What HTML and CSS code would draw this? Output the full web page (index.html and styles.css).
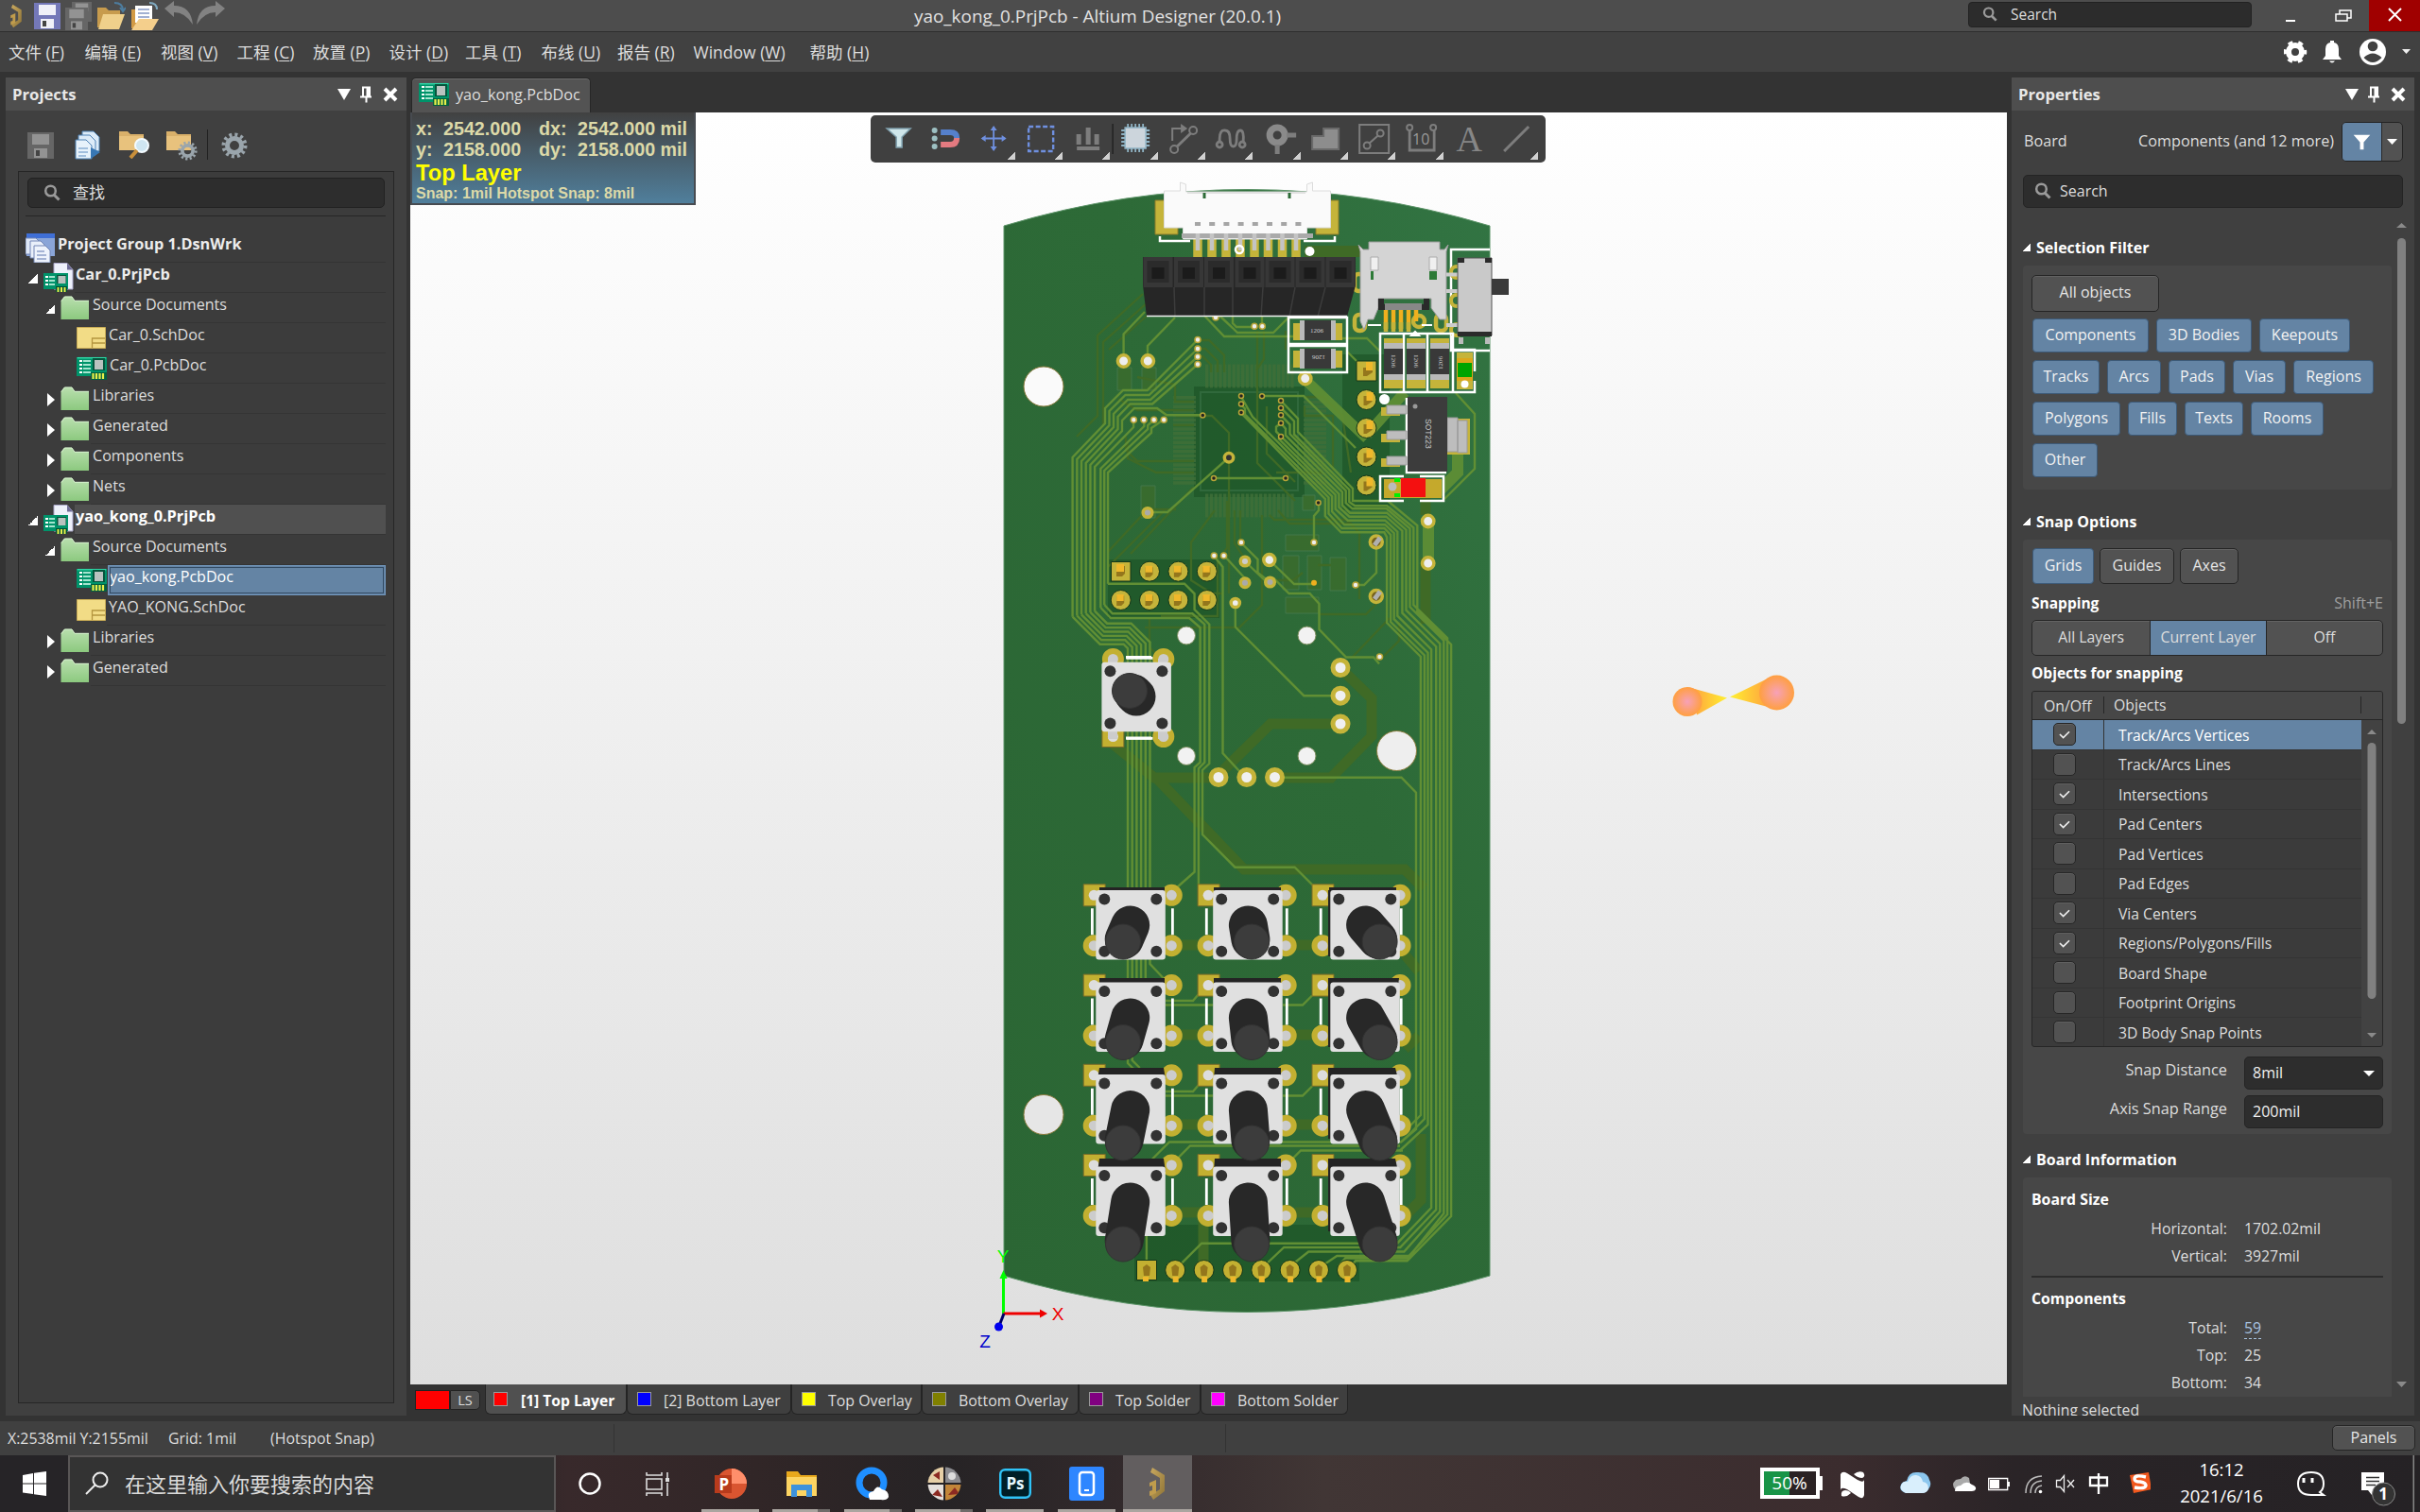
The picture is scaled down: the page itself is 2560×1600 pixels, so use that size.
FILE: index.html
```html
<!DOCTYPE html>
<html lang="zh">
<head>
<meta charset="utf-8">
<title>yao_kong_0.PrjPcb - Altium Designer (20.0.1)</title>
<link rel="stylesheet" href="styles.css">
</head>
<body>
<svg width="0" height="0" class="defs">
  <defs>
    <linearGradient id="gFolder" x1="0" y1="0" x2="0" y2="1"><stop offset="0" stop-color="#b9dfae"/><stop offset="1" stop-color="#8cc97f"/></linearGradient>
    <linearGradient id="gGold" x1="0" y1="0" x2="1" y2="1"><stop offset="0" stop-color="#c9a95f"/><stop offset="1" stop-color="#8f7436"/></linearGradient>
    <symbol id="i-folder" viewBox="0 0 31 26"><path d="M.5 25V5L4 .8h8L15 5h15v20z" fill="url(#gFolder)"/><path d="M1 5.5L4.500 1H12l3 4.300h15" fill="none" stroke="#d8f2d0"/></symbol>
    <symbol id="i-pcb" viewBox="0 0 32 26"><path d="M0 1h32v20H0z" fill="#00936a"/><path d="M.7 1.700h30.600" stroke="#2fd6a6" stroke-width="1.500"/><path d="M3 5h3M3 9h3M3 13h3M3 17h3" stroke="#fff" stroke-width="2"/><path d="M7 5h8M7 9h8M7 13h8M7 17h8" stroke="#d9fff0" stroke-width="1.300"/><path d="M17 2h13v13H17z" fill="#06553d"/><path d="M19 4h9v10h-9z" fill="#b9c2bf"/><path d="M15 17h17v8H15z" fill="#045f3f"/><path d="M17.500 18v6M21 18v6M24.500 18v6M28 18v6" stroke="#e8f04a" stroke-width="2.200"/></symbol>
    <symbol id="i-sch" viewBox="0 0 31 23"><path d="M.5.5h30v22H.5z" fill="#f2dc86" stroke="#c9ac55"/><path d="M16.500 22V12H30M17 17h13" fill="none" stroke="#b4953f" stroke-width="1.300"/></symbol>
    <symbol id="i-prj" viewBox="0 0 32 31"><path d="M11 .5h14l6 7V28H11z" fill="#eef1fb" stroke="#a9a6c8"/><path d="M25 .5v7h6z" fill="#6e6c96"/><path d="M0 11h26v17H0z" fill="#00936a"/><path d="M2 15h3M2 19h3M2 23h3" stroke="#fff" stroke-width="2"/><path d="M6 15h6M6 19h6M6 23h6" stroke="#d9fff0" stroke-width="1.300"/><path d="M14 13h10v9H14z" fill="#06553d"/><path d="M15.500 14h8v8h-8z" fill="#b9c2bf"/><path d="M13 25h12v6H13z" fill="#044f36"/><path d="M15.500 26v5M19 26v5M22.500 26v5" stroke="#e8f04a" stroke-width="2"/></symbol>
    <symbol id="i-group" viewBox="0 0 31 32"><path d="M1 1h30v24H1z" fill="#8aa5d8"/><path d="M1 1h30v5H1z" fill="#3f6fd6"/><path d="M0 6h11l3 3v14H0z" fill="#dfe8f7" stroke="#7286b5"/><path d="M5 9h11l4 4v14H5z" fill="#e9effa" stroke="#7286b5"/><path d="M9 14h12l5 5v13H9z" fill="#eef3fc" stroke="#7286b5"/><path d="M12 20h8M12 24h10M12 28h10" stroke="#8da0c8" stroke-width="1.500"/></symbol>
    <symbol id="i-floppy" viewBox="0 0 28 28"><path d="M0 0h28v28H0z" fill="currentColor"/><path class="slot" d="M5 2h18v11H5zM7 17h14v10H7z"/><path d="M9 19h4v6H9z" fill="#444"/></symbol>
    <symbol id="i-gear" viewBox="0 0 28 28"><circle cx="14" cy="14" r="11.500" fill="none" stroke="#9aa5ac" stroke-width="4" stroke-dasharray="3 3.020"/><circle cx="14" cy="14" r="7.500" fill="none" stroke="#9aa5ac" stroke-width="5"/></symbol>
    <symbol id="i-mag" viewBox="0 0 18 18"><circle cx="7.500" cy="7" r="5.300" fill="none" stroke="#9a9a9a" stroke-width="2.500"/><path d="M11 11l5.500 5.500" stroke="#9a9a9a" stroke-width="3"/></symbol>
    <symbol id="i-pin" viewBox="0 0 12 17"><path d="M2 0h9v10h1v2H7.500v5h-2v-5H0v-2h2z" fill="#fff"/><path d="M4 2h2.500v8H4z" fill="#4d4d4d"/></symbol>
    <symbol id="i-x" viewBox="0 0 16 16"><path d="M2 2l12 12M14 2L2 14" stroke="#fff" stroke-width="4"/></symbol>
    <symbol id="i-alt" viewBox="0 0 24 36"><path d="M7 1l13 8v17L8 35l-3-5 10-6V12L5 6z" fill="url(#gGold)"/><path d="M4 17l7-3v14l-7 3v-5l3-1v-5l-3 1z" fill="#c09c4c"/></symbol>
    <symbol id="i-tick" viewBox="0 0 24 20"><path d="M6.500 10l4 4 7-7" fill="none" stroke="#eee" stroke-width="1.800"/></symbol>
  </defs>
</svg>

<header class="title">
  <div class="quick">
    <svg width="20" height="26"><use href="#i-alt"/></svg>
    <svg class="save" width="28" height="28"><use href="#i-floppy"/></svg>
    <svg class="grey" width="28" height="30" viewBox="0 0 28 30"><use href="#i-floppy" x="7" y="0" width="21" height="21"/><use href="#i-floppy" x="0" y="6" width="24" height="24"/></svg>
    <svg width="31" height="30" viewBox="0 0 31 30"><path d="M1 6h9l3 3h12v18H1z" fill="#c79b4d"/><path d="M7 13h23l-6 16H2z" fill="#efd08b"/><path d="M19 1q9 0 9 8M25 6l3 4 3-4" fill="none" stroke="#4d7d9f" stroke-width="2"/></svg>
    <svg width="31" height="30" viewBox="0 0 31 30"><path d="M1 8h22v20H1z" fill="#d29a45"/><path d="M5 4h18v18H5z" fill="#fff"/><path d="M8 8h12M8 12h12M8 16h12" stroke="#8498c4" stroke-width="1.500"/><path d="M9 18h21l-7 12H1z" fill="#f4cf8c"/><path d="M20 1q8 0 8 7" fill="none" stroke="#7fa9bf" stroke-width="2"/></svg>
    <svg class="arrows" width="66" height="26" viewBox="0 0 66 26"><path d="M0 8L10 0v5q18 0 20 20Q22 12 10 12v5zM64 8L54 0v5q-18 0-20 20Q42 12 54 12v5z" fill="#828282"/></svg>
  </div>
  <div class="caption">yao_kong_0.PrjPcb - Altium Designer (20.0.1)</div>
  <div class="top-search"><svg width="16" height="16"><use href="#i-mag"/></svg>Search</div>
  <svg class="winbtns" width="126" height="33" viewBox="0 0 126 33"><path d="M0 21h10v2H0z" fill="#fff"/><path d="M57 15v-4h12v8h-4M53 15h12v7H53z" fill="none" stroke="#fff" stroke-width="1.500"/><path d="M72 0h54v33H72z" fill="#a00000" transform="translate(16)"/><path d="M109 9l13 13M122 9l-13 13" stroke="#fff" stroke-width="2"/></svg>
</header>

<nav class="menu">
  <span>文件 (<u>F</u>)</span><span>编辑 (<u>E</u>)</span><span>视图 (<u>V</u>)</span><span>工程 (<u>C</u>)</span><span>放置 (<u>P</u>)</span><span>设计 (<u>D</u>)</span><span>工具 (<u>T</u>)</span><span>布线 (<u>U</u>)</span><span>报告 (<u>R</u>)</span><span>Window (<u>W</u>)</span><span>帮助 (<u>H</u>)</span>
  <svg class="menu-icons" width="140" height="42" viewBox="0 0 140 42"><circle cx="12" cy="21" r="7" fill="none" stroke="#fff" stroke-width="6"/><circle cx="12" cy="21" r="10.500" fill="none" stroke="#fff" stroke-width="3.500" stroke-dasharray="5 6" stroke-dashoffset="2.500"/><path d="M41 29l3-4v-7q0-6 5-7V9h4v2q5 1 5 7v7l3 4zM48 30.500h6q-3 4-6 0z" fill="#fff"/><circle cx="94" cy="21" r="14" fill="#fff"/><circle cx="94" cy="15" r="5.300" fill="#414141"/><path d="M84.500 27q9.500-9 19 0-9.500 10-19 0z" fill="#414141"/><path d="M125 18h9l-4.500 5z" fill="#eee"/></svg>
</nav>

<main class="work">
  <aside class="panel projects">
    <div class="panel-head"><b>Projects</b><svg class="tri" width="14" height="12" viewBox="0 0 14 12"><path d="M0 0h14L7 12z" fill="#fff"/></svg><svg width="12" height="18"><use href="#i-pin"/></svg><svg width="16" height="16"><use href="#i-x"/></svg></div>
    <div class="tools">
      <svg class="grey" width="28" height="28"><use href="#i-floppy"/></svg>
      <svg width="28" height="31" viewBox="0 0 28 31"><path d="M8 1h12l6 6v15H8z" fill="#dcebf8" stroke="#4f82b5"/><path d="M4 5h12l6 6v15H4z" fill="#dcebf8" stroke="#4f82b5"/><path d="M1 10h11l6 6v14H1z" fill="#e7f2fb" stroke="#4f82b5"/><path d="M4 19h10M4 23h10M4 27h8" stroke="#5c8cc0"/><path d="M17 18l10 5-10 7z" fill="#3877b4"/></svg>
      <svg width="32" height="31" viewBox="0 0 32 31"><path d="M0 2h9l3 3h14v17H0z" fill="#d9b06a"/><path d="M0 7h26v15H0z" fill="#e8c27d"/><circle cx="24" cy="17" r="7" fill="#cfe6f2" stroke="#f4fbff" stroke-width="2"/><path d="M19 22l-7 8" stroke="#c88f3b" stroke-width="4"/></svg>
      <svg width="33" height="33" viewBox="0 0 33 33"><path d="M0 2h9l3 3h14v17H0z" fill="#d9b06a"/><path d="M0 7h26v15H0z" fill="#e8c27d"/><use href="#i-gear" x="12" y="12" width="21" height="21"/></svg>
      <i class="vsep"></i>
      <svg width="28" height="28"><use href="#i-gear"/></svg>
    </div>
    <div class="tree-box">
      <div class="find"><svg width="18" height="18"><use href="#i-mag"/></svg>查找</div>
      <ul class="tree">
        <li class="l0"><svg width="31" height="32"><use href="#i-group"/></svg><b>Project Group 1.DsnWrk</b></li>
        <li class="l1 open"><i></i><svg width="32" height="31"><use href="#i-prj"/></svg><b>Car_0.PrjPcb</b></li>
        <li class="l2 open"><i></i><svg width="31" height="26"><use href="#i-folder"/></svg><span>Source Documents</span></li>
        <li class="l3"><svg width="31" height="23"><use href="#i-sch"/></svg><span>Car_0.SchDoc</span></li>
        <li class="l3"><svg width="32" height="26"><use href="#i-pcb"/></svg><span>Car_0.PcbDoc</span></li>
        <li class="l2"><i></i><svg width="31" height="26"><use href="#i-folder"/></svg><span>Libraries</span></li>
        <li class="l2"><i></i><svg width="31" height="26"><use href="#i-folder"/></svg><span>Generated</span></li>
        <li class="l2"><i></i><svg width="31" height="26"><use href="#i-folder"/></svg><span>Components</span></li>
        <li class="l2"><i></i><svg width="31" height="26"><use href="#i-folder"/></svg><span>Nets</span></li>
        <li class="l1 open active"><i></i><svg width="32" height="31"><use href="#i-prj"/></svg><b>yao_kong_0.PrjPcb</b></li>
        <li class="l2 open"><i></i><svg width="31" height="26"><use href="#i-folder"/></svg><span>Source Documents</span></li>
        <li class="l3 picked"><svg width="32" height="26"><use href="#i-pcb"/></svg><span>yao_kong.PcbDoc</span></li>
        <li class="l3"><svg width="31" height="23"><use href="#i-sch"/></svg><span>YAO_KONG.SchDoc</span></li>
        <li class="l2"><i></i><svg width="31" height="26"><use href="#i-folder"/></svg><span>Libraries</span></li>
        <li class="l2"><i></i><svg width="31" height="26"><use href="#i-folder"/></svg><span>Generated</span></li>
      </ul>
    </div>
  </aside>

  <section class="editor">
    <div class="tabs"><div class="doc-tab"><svg width="32" height="26"><use href="#i-pcb"/></svg>yao_kong.PcbDoc</div></div>
    <div class="view">
      <svg class="board" width="1689" height="1346" viewBox="434 119 1689 1346">
        <defs>
          <radialGradient id="gBlob"><stop offset="0" stop-color="#f7a1b8"/><stop offset="1" stop-color="#ff9f40"/></radialGradient>
          <linearGradient id="gB1" x1="0" x2="1"><stop offset="0" stop-color="#ff9f40"/><stop offset="1" stop-color="#fff030"/></linearGradient>
          <linearGradient id="gB2" x1="1" x2="0"><stop offset="0" stop-color="#ff9f40"/><stop offset="1" stop-color="#fff030"/></linearGradient>
          <linearGradient id="gPcb" x1="0" y1="1" x2="1" y2="0"><stop offset="0" stop-color="#2b6634"/><stop offset=".6" stop-color="#2d6a37"/><stop offset="1" stop-color="#327443"/></linearGradient>
          <g id="pads"><path d="M.5.5h23v23H.5z" fill="#c3b031" stroke="#7b6c28"/><circle cx="93.600" cy="12" r="8.500" fill="#ccc" stroke="#c3b031" stroke-width="6"/><circle cx="11.500" cy="65.400" r="8.500" fill="#ccc" stroke="#c3b031" stroke-width="6"/><circle cx="93.600" cy="65.400" r="8.500" fill="#ccc" stroke="#c3b031" stroke-width="6"/><circle cx="11.500" cy="12" r="5.500" fill="#ddd"/><path d="M9.700 26v28M94.700 26v28" stroke="#fff" stroke-width="2.800"/></g>
          <g id="cap"><rect width="73.500" height="73.500" rx="3" fill="#e0e0e0"/><g fill="#323232"><circle cx="9" cy="9.500" r="6"/><circle cx="64" cy="9.500" r="6"/><circle cx="9" cy="64.700" r="6"/><circle cx="64" cy="64.700" r="6"/></g></g>
          <g id="ring"><circle r="8" fill="#f0f0f0" stroke="#c5b43a" stroke-width="5"/></g>
          <g id="hp"><circle r="10.500" fill="#c5b43a" stroke="#12371a"/><path d="M-4.500-4.500h8V3l-3 3h-5z" fill="#94761c"/><path d="M-4.500-6h7.500v7h-7.500z" fill="#efb82b"/></g>
          <g id="hr"><circle r="10.500" fill="#c5b43a" stroke="#12371a"/><path d="M-3-4h9v6l-6 4h-3z" fill="#94761c"/><path d="M0-8h7v9H0z" fill="#efb82b"/></g>
          <g id="bp"><circle r="10.500" fill="#c3b031" stroke="#12371a"/><path d="M-4-3l4-3 4 3-1 9h-6z" fill="#94761c"/><path d="M-2.500 7h6v6h-6z" fill="#efb82b"/></g>
          <g id="via"><circle r="3" fill="#eee" stroke="#b8a438" stroke-width="1.600"/></g>
          <g id="viad"><circle r="2.500" fill="#222" stroke="#b8a438" stroke-width="1.500"/></g>
          <g id="sock"><path d="M0 0h31v32H0z" fill="#373737"/><path d="M4 4h23v23H4z" fill="#2b2b2b"/><path d="M9 11h13v12H9z" fill="#1b1b1b"/></g>
        </defs>

        <path d="M1062 239Q1319 162 1576 239V1350Q1319 1427 1062 1350z" fill="url(#gPcb)" stroke="#5c9468"/>

        <g class="shade">
          <path d="M1263 409h117v117h-117zM1172 592h118v62h-118zM1420 375h50v165h-50zM1200 1296h238v60h-238z"/>
        </g>
        <g class="smd">
          <path d="M1360 566h35v17h-35zM1360 632h35v17h-35zM1357 588h17v36h-17zM1383 588h15v36h-15zM1407 590h17v35h-17zM1378 524h13v16h-13zM1182 389h15v24h-15zM1208 389h15v24h-15zM1207 514h15v34h-15z"/>
        </g>
        <g class="pins">
          <path d="M1275 398h94M1275 535h94" stroke-dasharray="3.400 1.350" stroke-width="25"/>
          <path d="M1253 419v94M1391 419v94" stroke-dasharray="3.400 1.350" stroke-width="24"/>
        </g>
        <path d="M1270 415h103v104h-103z" fill="none" stroke="#30693c" stroke-width="2"/>
        <g class="dim">
          <path d="M1420 709l31 30v40l-43 44h-59M1418 766h-74l-54 53M1177 787l44 36h68M1224 824l92 96h170l20 20M1508 590v70M1508 520v25"/>
          <path d="M1250 1000h25M1370 1000h25M1250 1095h25M1370 1095h25M1250 1190h25M1370 1190h25M1250 1283h25M1370 1283h25M1273 1290v50M1503 1200v70l-20 20M1486 1110l15-14M1486 1010l15 18"/>
          <path d="M1380 266h60" stroke-width="12"/>
        </g>
        <g class="dimthin">
          <path d="M1209 311l-48 44v85l-22 22M1214 320l-47 42v88M1220 328l-47 42M1267 360h12l16 16v18M1267 369h8l13 13v12M1267 377h5l9 9v8M1263 425h-20v-18l-40-8M1263 434h-60l-20-12M1244 440h38l18 18v170M1263 450h-22M1196 586l66-70M1172 584l42-45h30M1172 600l60-60M1263 500h-40l-30-15v-18M1263 488h-60l-12-12v-14M1298 530v50l-10 12v60h-60M1285 540l-25 34v40l22 14h12M1306 540v35l10 15M1312 540v36M1335 545v95l-24 24h-100M1343 545l5 5h76l14 14v70M1352 540l12 14h66M1380 420h20l20 20 9 60M1380 430v10h30v58M1360 350v20M1337 350v30l-8 12M1330 350v50M1216 655v30l10 10M1430 696l40-42M1460 698l20-20v-20M1395 650h50l12-12M1378 606l-10 8h-25M1394 598h14M1330 400v90l40 40M1340 430v50l30 30M1350 500h50"/>
        </g>

        <g class="track">
          <path d="M1134.600 652.700V484l34.400-36v-16l19-19h25.600l53.400-53.500M1139.300 651.500V486l34.200-36v-15l17-17h25l51.500-49M1144 650.300V488l34-36v-14l15-15h24l50-45.500M1148.700 649.100V490l33.800-36v-13l13-13.500h23.500l48-42M1153.400 647.900V492l33.600-36v-11l13-13h24l10 7.300h38M1158.100 646.700V494l41-42v-8M1164.300 643V496l46-45v-7M1168.200 640V498l46-44v-4l7-6M1172 617.700V500l46-42v-5l13-9"/>
          <path d="M1134.600 652.700l29 29h25l4.400 4.400V1125l6 6M1139.300 651.500l25.800 25.800h25.100l7.500 7.500V1122l8 8M1144 650.300l22.600 22.600h25.200l10.600 10.600V1035M1148.700 649.100l19.400 19.400h25.300l13.700 13.700V1035M1153.400 647.900l16.200 16.200H1195l16.800 16.800V1035M1158.100 646.700l13 13h25.500l19.900 19.900V1020l15 16"/>
          <path d="M1172 617.700h81l10.600 10.600V645l15.700 15.700V808l-7.300 7v68l34.400 34.700h63.200l20 20M1168.200 640l8.600 9.300h84.600l12.900 11.400v146l-6.400 6.600V936M1164.300 643l10.700 11h83l11.600 10v142.700l-6 5.300v110.700L1244 940"/>
          <path d="M1312.500 436.700L1401.800 528v18l16.800 17.300h45.700l2.800 5V659l35.800 36v485l-22 22M1312.500 427.500l4.500 5v6l88.500 88v17l14 15.500h45l6.600 7v92l35.800 35.500V1184l-24 24M1312.500 419l12.500 22 84.100 84.200v16l13.100 14h43l9.500 9v91l35.800 35.500V1190l-30 28M1355 461.700l-2 3 59.700 59v15l13 12h39.500l13.100 12v89l35.800 35.500V1278l-36 37.700h-207l-21 21M1355 447.700l-5 4v5l66.400 66v14l11 10h39l17 15v87l35.800 35.500V1280l-38 40h-123l-17 16M1355 447.700l5 6v7l60 60v14l8 8h39l20.500 18v85l35.800 35.500V1282l-38 42.500h-101l-19 15M1355 439.300l9.500 10v10l59.200 60v13l7 6h36l24.800 21v83l35.800 35.500V1284l-36 45h-77l-12 8M1355 431.700l14 14v14l58.300 58.500v13l6 4h34l28 23v82l35.800 35V1285l-43 46.500h-65l-7 8M1355 424l18 19v14l58 60v13h37l31.300 26v91l35.800 35v605l-46.500 47.300H1434l-6 6"/>
          <path d="M1350 822.700h132.500l15.500 16V1195l-16 13.500h-245l-18 18M1481 1212.500h-222l-16 16M1484 1217.500h-108l-16 16M1488 1224l-12 12M1306.800 663.500l72.500 72.700h38M1306.800 638v26M1284 588l9.500 12v197l24 26M1312.500 574l18 18v14l9 7 8-1 16 16h22l10 11v27l28.500 29.500h29l6 7M1295 588l22 24M1317 594l25 24M1342 592l27 26h21M1456 574v32l-13 13h-9M1390 574v-28l5-6v-8M1300 484l-65 58h-21M1284 506h76M1335 419h44l55 55"/>
          <path d="M1211 330l-22.400 23.500v25M1243 336l-29 30v14M1274 334l21 22h116M1304 334v8l4 4h20M1290 334l14 13 5 5h38l18-18M1335 334v11M1400 358h46l14 14M1425 372l12 12M1540 416l20 22v58l-32 32M1212.900 1308v34M1233 1059h29l6-7M1233 1063.500h50M1357 1063.500h21l10-10M1233 1155h29l6-7M1233 1159.500h50M1357 1159.500h21l10-10"/>
          <path d="M1383 404l63 60M1446 460l40-45" stroke-width="11" opacity=".9"/>
          <path d="M1511 552v44M1542 480v20l-22 22" stroke-width="12" opacity=".9"/>
        </g>

        <g fill="#fafafa" stroke="#8a7b3c"><circle cx="1104" cy="409" r="21"/><circle cx="1477.500" cy="794.500" r="21" fill="#eee"/><circle cx="1104" cy="1179.500" r="21" fill="#e6e6e6"/></g>
        <g fill="#f2f2f2" stroke="#7d8f60"><circle cx="1255" cy="672.500" r="9.500"/><circle cx="1382.500" cy="672.500" r="9.500"/><circle cx="1255" cy="800" r="9.500"/><circle cx="1382.500" cy="800" r="9.500"/></g>
        <use href="#ring" x="1418" y="706.500"/><use href="#ring" x="1418" y="736.200"/><use href="#ring" x="1418" y="766"/>
        <use href="#ring" x="1289" y="822.500"/><use href="#ring" x="1318.800" y="822.500"/><use href="#ring" x="1348.500" y="822.500"/>
        <g fill="#eee" stroke="#c5b43a" stroke-width="3.500"><circle cx="1188.600" cy="382" r="6.200"/><circle cx="1214.300" cy="382" r="6.200"/><circle cx="1380.700" cy="400.500" r="6.200"/><circle cx="1510.700" cy="551.500" r="6.200"/><circle cx="1510.700" cy="596" r="6.200"/><circle cx="1214" cy="542.500" r="4.800" fill="#aaa"/><circle cx="1317" cy="594" r="4.800" fill="#ccc"/><circle cx="1342.800" cy="592.500" r="6"/><circle cx="1317" cy="616.700" r="4.800" fill="#aaa"/><circle cx="1343.500" cy="616" r="4.800" fill="#aaa"/><circle cx="1306.800" cy="638" r="4.600"/><circle cx="1300" cy="484.300" r="4.700" fill="#333"/></g>
        <g stroke="#c5b43a" stroke-width="3.500" fill="#75611c"><circle cx="1455.800" cy="573.500" r="6.500"/><circle cx="1455.800" cy="631" r="6.500"/></g><path d="M1454 577l6-8M1454 634l6-8" stroke="#b0b0b0" stroke-width="5"/>
        <use href="#via" x="1267" y="359.500"/><use href="#via" x="1267" y="369"/><use href="#via" x="1267" y="377.500"/><use href="#via" x="1267" y="385.500"/><use href="#via" x="1199.300" y="444.300"/><use href="#via" x="1210" y="444.300"/><use href="#via" x="1220.700" y="444.300"/><use href="#via" x="1231.200" y="444.300"/><use href="#via" x="1327" y="345.300"/><use href="#via" x="1335.300" y="345.300"/><use href="#via" x="1286" y="336"/><use href="#via" x="1313" y="574"/><use href="#via" x="1284.300" y="588"/><use href="#via" x="1294.600" y="588"/><use href="#via" x="1390" y="574"/><use href="#via" x="1434" y="619"/><use href="#via" x="1459.500" y="695"/>
        <use href="#viad" x="1272.300" y="439.500"/><use href="#viad" x="1313" y="419"/><use href="#viad" x="1313" y="427.500"/><use href="#viad" x="1313" y="436.500"/><use href="#viad" x="1335" y="419.300"/><use href="#viad" x="1355" y="424"/><use href="#viad" x="1355" y="431.700"/><use href="#viad" x="1355" y="439.300"/><use href="#viad" x="1355" y="447.700"/><use href="#viad" x="1355" y="462"/><use href="#viad" x="1284" y="506"/><use href="#viad" x="1360" y="506"/><use href="#viad" x="1394.600" y="532"/>
        <circle cx="1390" cy="616.700" r="3" fill="#f0b01e"/>

        <path d="M1175.500 594.500h20.500v20.500h-20.500zM1435 382h21v21h-21z" fill="#c5b43a" stroke="#12371a"/>
        <path d="M1181 599h9v8l-3 3h-6z" fill="#94761c"/><path d="M1181 597h8v8h-8z" fill="#efb82b"/>
        <use href="#hp" x="1216" y="604.700"/><use href="#hp" x="1246.400" y="604.700"/><use href="#hp" x="1276.800" y="604.700"/>
        <use href="#hp" x="1185.700" y="635"/><use href="#hp" x="1216" y="635"/><use href="#hp" x="1246.400" y="635"/><use href="#hp" x="1276.800" y="635"/>
        <path d="M1442 389h10v5l-6 4h-4z" fill="#94761c"/><path d="M1445 383h7v9h-7z" fill="#efb82b"/>
        <use href="#hr" x="1445.500" y="423"/><use href="#hr" x="1445.500" y="453"/><use href="#hr" x="1445.500" y="483.500"/><use href="#hr" x="1445.500" y="513.500"/>
        <path d="M1202.500 1333.500h21v21h-21z" fill="#c3b031" stroke="#12371a"/><path d="M1209 1341l4-3 4 3-1 9h-6z" fill="#94761c"/><path d="M1209 1351h6v5h-6z" fill="#efb82b"/>
        <use href="#bp" x="1243.200" y="1344"/><use href="#bp" x="1273.600" y="1344"/><use href="#bp" x="1304" y="1344"/><use href="#bp" x="1334.300" y="1344"/><use href="#bp" x="1364.600" y="1344"/><use href="#bp" x="1395" y="1344"/><use href="#bp" x="1425" y="1344"/>

        <g>
          <path d="M1222 212h24v36h-24zM1392 212h24v36h-24z" fill="#c5b43a" stroke="#8c7d2a"/>
          <path d="M1267 253v20M1282 253v20M1297 253v20M1312 253v20M1327 253v20M1341.500 253v20M1356.500 253v20M1371 253v20" stroke="#c5b43a" stroke-width="9.500"/>
          <path d="M1227 250v5h32M1379 255h33v-5" fill="none" stroke="#fff" stroke-width="2.500"/>
          <path d="M1231.500 202h17v-9l6 2v8h128v-8l6-2v9h19v39h-25v12h-131v-12h-20z" fill="#fafafa" stroke="#dcdcdc"/>
          <path d="M1256 204h125" stroke="#e0e0e0" stroke-width="2"/><path d="M1274 204v6M1364 204v6" stroke="#2d6b37" stroke-width="3"/>
          <path d="M1250 247h139v5h-139z" fill="#aaa"/><path d="M1259 237h125" stroke="#a5a5a5" stroke-width="4" stroke-dasharray="6 9.200" stroke-dashoffset="-5"/>
          <path d="M1267 247v18M1282 247v18M1297 247v18M1312 247v18M1327 247v18M1341.500 247v18M1356.500 247v18M1371 247v18" stroke="#c4c4c4" stroke-width="4.500"/>
          <circle cx="1311" cy="264" r="4" fill="none" stroke="#fff" stroke-width="2.500"/><circle cx="1385.500" cy="266" r="5" fill="#fff"/>
        </g>
        <g fill="none" stroke="#c5b43a" stroke-width="4.500"><rect x="1433" y="333" width="11" height="17" rx="5"/><rect x="1519" y="333" width="11" height="17" rx="5"/><rect x="1433" y="290" width="9" height="18" rx="4"/><circle cx="1501" cy="340" r="6"/></g>
        <path d="M1209 272h225v30l-9 33h-212l-4-33z" fill="#262626"/>
        <use href="#sock" x="1209.500" y="272"/><use href="#sock" x="1242" y="272"/><use href="#sock" x="1274" y="272"/><use href="#sock" x="1306.500" y="272"/><use href="#sock" x="1338.500" y="272"/><use href="#sock" x="1370.500" y="272"/><use href="#sock" x="1402.500" y="272"/>
        <path d="M1242 304l1 31M1274 304v31M1304 304v31M1336 304l-2 31M1370 304l-6 31M1402 304l-8 31" stroke="#3c3c3c" stroke-width="1.500"/><path d="M1213 334.500h212" stroke="#f2f2f2" stroke-width="1.300"/>

        <g>
          <path d="M1466 328v20M1474 328v20M1482 328v20M1490 328v20M1498 328v12" stroke="#f0b01e" stroke-width="4.500"/><path d="M1466 341v10M1474 341v10M1482 341v10M1490 341v10" stroke="#c5b43a" stroke-width="4.500"/>
          <path d="M1437 259l5 5h6v-8h75v8h5l4-5-2 7v72h-7l-9-12v-10h-56v10l-5 12h-6l-4 11-4-9V266z" fill="#d4d4d4" stroke="#9c9c9c"/>
          <path d="M1450 272h8v14h-8zM1512 272h8v14h-8z" fill="#f0f0f0" stroke="#aaa"/><path d="M1450 287h3v9h-3zM1512 287h8v9h-8z" fill="#2d7a37"/>
          <path d="M1458 316h6v6h42v-6h6v12h-54z" fill="#2a2a2a"/><path d="M1465 321h39v7h-39z" fill="#888"/>
          <path d="M1447 344h14M1504 344h11M1493 355h8l-4-4z" stroke="#fff" stroke-width="2" fill="none"/>
        </g>
        <path d="M1576 264h-41v107h41M1576 371h-41" fill="none" stroke="#fff" stroke-width="2.500"/>
        <g stroke="#c5b43a" stroke-width="4" fill="none"><circle cx="1541" cy="288" r="6"/><circle cx="1541" cy="318" r="6"/><circle cx="1541" cy="349" r="6"/></g>
        <path d="M1530 290.500h13M1530 308h13M1530 344h13" stroke="#ccc" stroke-width="4"/><path d="M1542 273h36v82h-36z" fill="#c9c9c9" stroke="#555"/><path d="M1542 273h7v5h-7zM1571 273h7v5h-7zM1542 351h36v5h-36z" fill="#2b2b2b"/><path d="M1578 295h18v17h-18z" fill="#3a3a3a"/><path d="M1543 357h5v7h-5zM1571 357h5v7h-5z" fill="#bbb"/>

        <g fill="none" stroke="#fff" stroke-width="2.500"><path d="M1363 336h62v28h-62zM1363 366h62v28h-62zM1460 353h25v62h-25zM1485 353h25v62h-25zM1510 353h27v62h-27zM1560 393v-23h-23v45h23v-12M1485 504h-25v26h25M1502 504h25v26h-25M1488 421v79h42"/></g>
        <path d="M1368 342h52v18h-52zM1368 371h52v18h-52zM1464 358h20v53h-20zM1488 358h20v53h-20zM1513 358h20v53h-20zM1541 373h17v39h-17z" fill="#c5b43a"/>
        <path d="M1375 339h38v21h-38zM1375 369h38v21h-38zM1464 363h20v39h-20zM1488 363h20v39h-20zM1513 363h20v39h-20z" fill="#b9b9b9"/>
        <path d="M1380 339h28v21h-28zM1380 369h28v21h-28zM1464 369h20v27h-20zM1488 369h20v27h-20zM1513 369h20v27h-20z" fill="#393939"/>
        <g class="chiptext"><text x="1386" y="352">1206</text><text transform="translate(1402 376) rotate(180)">1206</text><text transform="translate(1471.500 375) rotate(90)">1206</text><text transform="translate(1495.500 375) rotate(90)">1206</text><text transform="translate(1526 391) rotate(-90)">1206</text></g>
        <path d="M1541 379h17v24h-17z" fill="#dba71c"/><path d="M1542 384h15v15h-15z" fill="#00a400"/><circle cx="1549.500" cy="406.500" r="4" fill="#fff"/>
        <circle cx="1464.500" cy="422.500" r="5.500" fill="#fff"/>
        <path d="M1461 431h20v9h-20zM1461 459h20v9h-20zM1461 485h20v9h-20zM1531 443h24v38h-24z" fill="#c5b43a"/>
        <path d="M1467 429h21v9h-21zM1467 456h21v9h-21zM1467 483h21v9h-21zM1531 442h11v36h-11zM1542 445h10v34h-10z" fill="#bdbdbd" stroke="#999"/>
        <path d="M1489 420h42v79h-42z" fill="#3c3c3c"/><circle cx="1497" cy="430" r="2.500" fill="#999"/><text class="sot" transform="translate(1508 443) rotate(90)">SOT223</text>
        <path d="M1464 507h61v20h-61z" fill="#c5a92c"/><circle cx="1473" cy="515" r="4.500" fill="#bbb"/><path d="M1475 506h6v4h-6zM1475 522h6v4h-6z" fill="#0e0"/><path d="M1482 506h26v20h-26z" fill="#f41010"/>

        <use href="#pads" transform="matrix(0 -1 1 0 1165.400 791)"/>
        <path d="M1191 695.500h27M1191 781h27" stroke="#fff" stroke-width="3"/>
        <path d="M1172 697h10v5h-10zM1225 697h10v5h-10zM1172 773h10v9h-10zM1225 773h10v9h-10z" fill="#ccc"/>
        <use href="#cap" x="1165.400" y="700.700"/><path d="M1202 737l-3-3" class="stem"/><circle cx="1195" cy="731" r="18.500" class="tip"/>

        <use href="#pads" x="1145.700" y="935.300"/><use href="#pads" x="1266.600" y="935.300"/><use href="#pads" x="1387.500" y="935.300"/>
        <use href="#pads" x="1145.700" y="1030.600"/><use href="#pads" x="1266.600" y="1030.600"/><use href="#pads" x="1387.500" y="1030.600"/>
        <use href="#pads" x="1145.700" y="1125.800"/><use href="#pads" x="1266.600" y="1125.800"/><use href="#pads" x="1387.500" y="1125.800"/>
        <use href="#pads" x="1145.700" y="1221"/><use href="#pads" x="1266.600" y="1221"/><use href="#pads" x="1387.500" y="1221"/>
        <path d="M1163 939h69v6h-69zM1284 939h71v6h-71zM1406 939h71v20h-71zM1163 1035h69v8h-69zM1284 1035h71v8h-71zM1405 1035h75l-1 8h-74zM1163 1130h68l2 12h-72zM1285 1130h70v12h-71zM1405 1130h71l3 12h-74zM1163 1226h68l2 14h-72zM1285 1226h70v14h-71zM1405 1226h71l3 14h-74z" fill="#242424"/>
        <path d="M1405 942h4v70h-4zM1405 1040h4v68h-4zM1405 1137h4v68h-4zM1405 1235h4v68h-4z" fill="#242424"/>
        <use href="#cap" x="1159.300" y="942"/><use href="#cap" x="1283.200" y="942"/><use href="#cap" x="1407.300" y="942"/>
        <use href="#cap" x="1159.300" y="1039.500"/><use href="#cap" x="1283.200" y="1039.500"/><use href="#cap" x="1407.300" y="1039.500"/>
        <use href="#cap" x="1159.300" y="1137"/><use href="#cap" x="1283.200" y="1137"/><use href="#cap" x="1407.300" y="1137"/>
        <g class="stem"><path d="M1195.700 979l-6.500 15M1320.400 979l2.500 15M1444.600 979l13 15M1195.700 1077l-6.500 23M1320.400 1077l2.500 23M1444.600 1077l13 23M1195.700 1174.500l-6.500 32M1320.400 1174.500l2.500 32M1444.600 1174.500l13 32"/></g>
        <g class="tip"><circle cx="1188" cy="996.500" r="18.500"/><circle cx="1324" cy="996.500" r="18.500"/><circle cx="1459.600" cy="996.500" r="18.500"/><circle cx="1188" cy="1103" r="18.500"/><circle cx="1324" cy="1103" r="18.500"/><circle cx="1459.600" cy="1103" r="18.500"/></g>
        <use href="#cap" x="1159.300" y="1234.500"/><use href="#cap" x="1283.200" y="1234.500"/><use href="#cap" x="1407.300" y="1234.500"/>
        <g class="stem"><path d="M1195.700 1272l-6.500 41M1320.400 1272l2.500 41M1444.600 1272l13 41"/></g>
        <g class="tip"><circle cx="1188" cy="1209.500" r="18.500"/><circle cx="1324" cy="1209.500" r="18.500"/><circle cx="1459.600" cy="1209.500" r="18.500"/><circle cx="1188" cy="1316.500" r="18.500"/><circle cx="1324" cy="1316.500" r="18.500"/><circle cx="1459.600" cy="1316.500" r="18.500"/></g>

        <path d="M1061.500 1390v-38" stroke="#0f0" stroke-width="3"/><path d="M1057.500 1353h8l-4-9z" fill="#0f0"/>
        <path d="M1061.500 1390h40" stroke="#e00" stroke-width="3"/><path d="M1100 1385.500v9l8-4.500z" fill="#e00"/>
        <path d="M1062 1390l-5 13" stroke="#006" stroke-width="3"/><circle cx="1056.500" cy="1404" r="4.500" fill="#00e"/>
        <g class="axis"><text x="1061" y="1336" fill="#0f0">Y</text><text x="1119" y="1396.500" fill="#e00">X</text><text x="1042" y="1426" fill="#00c">Z</text></g>

        <path d="M1789 728l38 10.500-32 18z" fill="url(#gB1)"/><path d="M1868 719l-38 18.500 42 11z" fill="url(#gB2)"/><circle cx="1785" cy="742.500" r="15.500" fill="url(#gBlob)"/><circle cx="1879.500" cy="733" r="18.500" fill="url(#gBlob)"/>
      </svg>

      <div class="hud">
        <div class="xy"><span>x:</span><span>2542.000</span><span>dx:</span><span>2542.000 mil</span><span>y:</span><span>2158.000</span><span>dy:</span><span>2158.000 mil</span></div>
        <div class="lay">Top Layer</div>
        <div class="snap">Snap: 1mil Hotspot Snap: 8mil</div>
      </div>

      <div class="bar">
        <svg viewBox="0 0 50 50"><path d="M13 14h25l-9 9v11h-6V23z" fill="#cfe6ea" stroke="#7f9fac" stroke-width="1.500"/></svg>
        <svg viewBox="0 0 50 50"><path d="M20 18h10q7 0 7 6" fill="none" stroke="#5580cc" stroke-width="6"/><path d="M37 24q0 7-7 7H20" fill="none" stroke="#e47a80" stroke-width="6"/><g fill="#9dc0c2"><circle cx="13.500" cy="16" r="3"/><circle cx="13.500" cy="24.500" r="3"/><circle cx="13.500" cy="33" r="3"/></g></svg>
        <svg class="more" viewBox="0 0 50 50"><path d="M13 24.500h24M25 12.500v24" stroke="#6f90e0" stroke-width="1.800"/><path d="M25 11l3.500 5h-7zM25 38l3.500-5h-7zM11.500 24.500l5-3.500v7zM38.500 24.500l-5-3.500v7z" fill="#6f90e0"/></svg>
        <svg class="more" viewBox="0 0 50 50"><path d="M12 12h26v26H12z" fill="none" stroke="#6f90e0" stroke-width="2.400" stroke-dasharray="5 2.500"/></svg>
        <svg class="more" viewBox="0 0 50 50"><path d="M15 20v11M25 13v18M34 20v11" stroke="#7d7d7d" stroke-width="5"/><path d="M13 35h24" stroke="#7d7d7d" stroke-width="4"/></svg>
        <svg class="more" viewBox="0 0 50 50"><path d="M1 9v32" stroke="#222" stroke-width="1.500"/><path d="M17 9v30M21 9v30M25 9v30M29 9v30M33 9v30M10 16h30M10 20h30M10 24h30M10 28h30M10 32h30" stroke="#8fb3c4" stroke-width="1.800"/><path d="M14 13h22v22H14z" fill="#ccd5dc" stroke="#8fb3c4" stroke-width="1.500"/></svg>
        <svg class="more" viewBox="0 0 50 50"><g fill="none" stroke="#7d7d7d" stroke-width="2"><path d="M13 27V14h11"/><circle cx="35" cy="16" r="4"/><circle cx="15" cy="36" r="4"/><path d="M32.500 19L18 33" stroke-width="3"/></g><path d="M22 9l7 5-7 5z" fill="#7d7d7d"/></svg>
        <svg class="more" viewBox="0 0 50 50"><g fill="none" stroke="#7d7d7d" stroke-width="2.800"><circle cx="13" cy="31" r="3"/><circle cx="37" cy="31" r="3"/><path d="M13 28v-3q0-10 6-9 5 0 5 9 0 8 3.500 8T31 25q0-9 4-9 4 0 3 12"/></g></svg>
        <svg class="more" viewBox="0 0 50 50"><circle cx="24" cy="21" r="8" fill="none" stroke="#8a8a8a" stroke-width="7"/><path d="M34 21h10M24 31v10" stroke="#7d7d7d" stroke-width="5"/></svg>
        <svg class="more" viewBox="0 0 50 50"><path d="M10 22h12v-8h16v22H10z" fill="#8d8d8d" stroke="#6a6a6a" stroke-width="2"/></svg>
        <svg class="more" viewBox="0 0 50 50"><g fill="none" stroke="#7d7d7d" stroke-width="2"><path d="M10 10h31v30H10z"/><circle cx="32" cy="19" r="3.500"/><circle cx="18" cy="32" r="3.500"/><path d="M29.500 21.500L20.500 29.500"/></g></svg>
        <svg class="more" viewBox="0 0 50 50"><g fill="none" stroke="#7d7d7d" stroke-width="2"><circle cx="13" cy="13" r="3"/><circle cx="38" cy="13" r="3"/><path d="M13 16v21h26V16" stroke-width="2.800"/></g><text x="25" y="31" text-anchor="middle" font-size="16" fill="#999">10</text></svg>
        <svg viewBox="0 0 50 50"><text class="bigA" x="25" y="38" text-anchor="middle">A</text></svg>
        <svg class="more" viewBox="0 0 50 50"><path d="M12 38L38 12" stroke="#7d7d7d" stroke-width="3"/></svg>
      </div>
    </div>
    <div class="layers">
      <div class="ls"><i></i><span>LS</span></div>
      <div class="ly on w1"><i class="c-red"></i>[1] Top Layer</div>
      <div class="ly w2"><i class="c-blue"></i>[2] Bottom Layer</div>
      <div class="ly w3"><i class="c-yel"></i>Top Overlay</div>
      <div class="ly w4"><i class="c-olive"></i>Bottom Overlay</div>
      <div class="ly w5"><i class="c-pur"></i>Top Solder</div>
      <div class="ly w6"><i class="c-mag"></i>Bottom Solder</div>
    </div>
  </section>

  <aside class="panel props">
    <div class="panel-head"><b>Properties</b><svg class="tri" width="14" height="12" viewBox="0 0 14 12"><path d="M0 0h14L7 12z" fill="#fff"/></svg><svg width="12" height="18"><use href="#i-pin"/></svg><svg width="16" height="16"><use href="#i-x"/></svg></div>
    <div class="scope"><span>Board</span><span class="cnt">Components (and 12 more)</span><div class="fbtn"><svg width="42" height="39" viewBox="0 0 42 39"><path d="M12 12h18l-7 8v8h-4v-8z" fill="#fff"/></svg><svg class="dd" width="21" height="39" viewBox="0 0 21 39"><path d="M5 17h11l-5.500 6z" fill="#fff"/></svg></div></div>
    <div class="psearch"><svg width="18" height="18"><use href="#i-mag"/></svg>Search</div>
    <div class="scroller">
      <div class="content">
        <h3>Selection Filter</h3>
        <div class="group sel">
          <button class="btn all">All objects</button>
          <div class="chips"><b class="n1">Components</b><b class="n2">3D Bodies</b><b class="n3">Keepouts</b></div>
          <div class="chips"><b class="n4">Tracks</b><b class="n5">Arcs</b><b class="n6">Pads</b><b class="n7">Vias</b><b class="n8">Regions</b></div>
          <div class="chips"><b class="n9">Polygons</b><b class="n10">Fills</b><b class="n11">Texts</b><b class="n12">Rooms</b></div>
          <div class="chips"><b class="n13">Other</b></div>
        </div>
        <h3>Snap Options</h3>
        <div class="group snapg">
          <div class="modes"><b class="chip">Grids</b><button class="btn g2">Guides</button><button class="btn g3">Axes</button></div>
          <div class="lab"><strong>Snapping</strong><span>Shift+E</span></div>
          <div class="seg"><span>All Layers</span><span class="on">Current Layer</span><span>Off</span></div>
          <div class="lab l2b"><strong>Objects for snapping</strong></div>
          <div class="table">
            <div class="th"><span>On/Off</span><span>Objects</span></div>
            <div class="tb">
              <div class="rows">
                <div class="r cur"><i><svg><use href="#i-tick"/></svg></i><span>Track/Arcs Vertices</span></div>
                <div class="r"><i></i><span>Track/Arcs Lines</span></div>
                <div class="r"><i><svg><use href="#i-tick"/></svg></i><span>Intersections</span></div>
                <div class="r"><i><svg><use href="#i-tick"/></svg></i><span>Pad Centers</span></div>
                <div class="r"><i></i><span>Pad Vertices</span></div>
                <div class="r"><i></i><span>Pad Edges</span></div>
                <div class="r"><i><svg><use href="#i-tick"/></svg></i><span>Via Centers</span></div>
                <div class="r"><i><svg><use href="#i-tick"/></svg></i><span>Regions/Polygons/Fills</span></div>
                <div class="r"><i></i><span>Board Shape</span></div>
                <div class="r"><i></i><span>Footprint Origins</span></div>
                <div class="r"><i></i><span>3D Body Snap Points</span></div>
              </div>
              <svg class="sb" width="22" height="346" viewBox="0 0 22 346"><path d="M6 15h10l-5-5zM6 331h10l-5 5z" fill="#8a8a8a"/><rect x="6.500" y="24" width="9" height="271" rx="4.500" fill="#808080"/></svg>
            </div>
          </div>
          <div class="field f1"><label>Snap Distance</label><div class="inp">8mil<svg width="12" height="6" viewBox="0 0 12 6"><path d="M0 0h12L6 6z" fill="#fff"/></svg></div></div>
          <div class="field"><label>Axis Snap Range</label><div class="inp">200mil</div></div>
        </div>
        <h3 class="h3rd">Board Information</h3>
        <div class="group info">
          <strong>Board Size</strong>
          <div class="kv"><span>Horizontal:</span><span>1702.02mil</span></div>
          <div class="kv"><span>Vertical:</span><span>3927mil</span></div>
          <hr>
          <strong>Components</strong>
          <div class="kv"><span>Total:</span><span class="lnk">59</span></div>
          <div class="kv"><span>Top:</span><span>25</span></div>
          <div class="kv"><span>Bottom:</span><span>34</span></div>
        </div>
      </div>
      <svg class="sb" width="24" height="1250" viewBox="0 0 24 1250"><path d="M5 13h11l-5.500-5zM5 1234h11l-5.500 6z" fill="#8a8a8a"/><rect x="6" y="24" width="9" height="514" rx="4.500" fill="#808080"/></svg>
    </div>
    <div class="nothing">Nothing selected</div>
  </aside>
</main>

<footer class="status"><span class="s1">X:2538mil Y:2155mil</span><span class="s2">Grid: 1mil</span><span class="s3">(Hotspot Snap)</span><span class="s4"></span><button class="btn pn">Panels</button></footer>

<div class="taskbar">
  <div class="start"><svg width="26" height="26" viewBox="0 0 26 26"><path d="M0 4l11-2v10.500H0zM12 1.800L25 0v12.500H12zM0 13.500h11V24L0 22.500zM12 13.500h13V26l-13-1.800z" fill="#fff"/></svg></div>
  <div class="wsearch"><svg width="26" height="26" viewBox="0 0 26 26"><circle cx="16" cy="9" r="7.500" fill="none" stroke="#eee" stroke-width="2"/><path d="M10.500 14.500L1 24" stroke="#eee" stroke-width="2"/></svg>在这里输入你要搜索的内容</div>
  <div class="apps">
    <div class="app sys"><svg width="28" height="28" viewBox="0 0 28 28"><circle cx="14" cy="14" r="10.500" fill="none" stroke="#fff" stroke-width="2.500"/></svg></div>
    <div class="app sys"><svg width="28" height="28" viewBox="0 0 28 28"><g fill="none" stroke="#ddd" stroke-width="1.600"><path d="M2 9h16v11H2zM2 2v3h16V2M2 27v-3h16v3M24 2v6M24 13v14"/></g><path d="M22 8h4v4h-4z" fill="#ddd"/></svg></div>
    <div class="app run"><svg width="36" height="36" viewBox="0 0 36 36"><circle cx="19" cy="18" r="16" fill="#d95530"/><path d="M19 2a16 16 0 0 1 16 16H19z" fill="#ff8f6b"/><path d="M1 9h18v19H1z" fill="#b83b1c"/><text x="5.500" y="24.500" class="pp">P</text></svg></div>
    <div class="app run multi"><svg width="34" height="30" viewBox="0 0 34 30"><path d="M1 2h12l3 4h17v20H1z" fill="#e8a81c"/><path d="M1 8h32v20H1z" fill="#fcd462"/><path d="M6 16h22v13h-6v-7h-10v7H6z" fill="#3d92db"/></svg></div>
    <div class="app run multi"><svg width="38" height="36" viewBox="0 0 38 36"><circle cx="18" cy="17" r="13" fill="none" stroke="#1f8fff" stroke-width="7"/><path d="M16 35q-4-8 4-9 4-8 9-2 7 1 7 8-2 4-8 3z" fill="#fff"/></svg></div>
    <div class="app run multi"><svg width="36" height="36" viewBox="0 0 36 36"><clipPath id="cc"><circle cx="18" cy="18" r="17.500"/></clipPath><g clip-path="url(#cc)"><path d="M0 0h17v17H0z" fill="#e6cfa6"/><path d="M19 0h17v17H19z" fill="#8c8c90"/><path d="M0 19h17v17H0z" fill="#e5e0dc"/><path d="M19 19h17v17H19z" fill="#c2863a"/><path d="M6 9l7-4v9zM22 30l7-8 5 7zM5 30l6-6 5 8z" fill="#8c2a22"/><circle cx="26" cy="10" r="4" fill="#ddd"/></g></svg></div>
    <div class="app run"><svg width="34" height="32" viewBox="0 0 34 32"><rect x="1.200" y="1.200" width="31.600" height="29.600" rx="5" fill="#001e26" stroke="#2fc3f7" stroke-width="2.400"/><text x="17" y="22" text-anchor="middle" class="ps">Ps</text></svg></div>
    <div class="app run"><svg width="37" height="36" viewBox="0 0 37 36"><rect width="37" height="36" rx="3" fill="#2e86ff"/><rect x="11" y="6" width="15" height="24" rx="3" fill="none" stroke="#fff" stroke-width="2.500"/><path d="M16 25h5" stroke="#fff" stroke-width="2"/></svg></div>
    <div class="app run cur"><svg width="26" height="36"><use href="#i-alt"/></svg></div>
  </div>
  <svg class="tray" width="420" height="60" viewBox="1855 1540 420 60">
    <path d="M1864 1555h59v29h-59z" fill="#2a2224" stroke="#fff" stroke-width="4"/><path d="M1924 1562h4v15h-4z" fill="#fff"/><path d="M1866 1557h27v25h-27z" fill="#189447"/><text x="1893" y="1576" text-anchor="middle" font-size="19" fill="#fff">50%</text>
    <path d="M1947 1560q2-4 7-1l11 7q7 4 7-1v17q-1 5-6 2l-12-8q-7-3-7 1zM1961 1560q5-4 10-2 3 4-1 6-5 0-9-4zM1948 1583q-1-6 4-6 4 0 6 3-5 5-10 3z" fill="#fff"/>
    <path d="M2017 1580q-9-2-6-9 1-3 6-4 2-9 10-9 12-1 14 8 3 5-1 10-2 4-8 4z" fill="#8cc7ee"/><path d="M2016 1580q-8-4-4-10 2-3 6-2 3-8 9-7 6 1 7 7 6 1 6 7-1 5-7 5z" fill="#d9effc"/>
    <path d="M2069 1577q-6-6 0-11 4-1 5-1 4-5 9-1l1 6z" fill="#aaa"/><path d="M2068 1578q0-6 6-6 6-6 12-1 5 2 4 5-1 2-4 2z" fill="#fff"/>
    <path d="M2103.700 1564.500h20v12h-20z" fill="none" stroke="#fff" stroke-width="1.300"/><path d="M2105 1566h10v9h-10zM2124 1568h2v5h-2z" fill="#fff"/>
    <g fill="none" stroke="#bbb" stroke-width="1.500"><path d="M2143 1580q0-17 17-18M2148 1580q0-12 12-13M2153 1580q0-7 7-8"/></g><circle cx="2158.500" cy="1578.500" r="1.800" fill="#fff"/>
    <path d="M2175.500 1566.500h4l4-5v17l-4-5h-4zM2187 1566l7 8M2194 1566l-7 8" fill="none" stroke="#eee" stroke-width="1.300"/>
    <path d="M2211 1563.500h18v8.500h-18zM2220 1559v22" fill="none" stroke="#fff" stroke-width="2.300"/>
    <path d="M2253 1561l20-3 3 18-19 4z" fill="#f2581d"/><path d="M2270 1563q-12-3-12 2 0 3 6 3 6 1 6 4-1 4-12 2" fill="none" stroke="#fff" stroke-width="3.400"/>
  </svg>
  <div class="clock"><span>16:12</span><span>2021/6/16</span></div>
  <svg width="135" height="60" viewBox="2425 1540 135 60"><path d="M2458 1582h-13q-14 0-14-12 0-12 14-12 13 0 13 12 0 6-4 9z" fill="none" stroke="#fff" stroke-width="2"/><path d="M2437 1564v5M2446 1564v5" stroke="#fff" stroke-width="3"/><path d="M2498 1558h24v19h-9l-4 5-4-5h-7z" fill="#fff"/><path d="M2503 1563.500h14M2503 1567.500h14M2503 1571.500h10" stroke="#333" stroke-width="1.300"/><circle cx="2521.500" cy="1581" r="12" fill="#333" stroke="#888"/><text x="2521" y="1587" text-anchor="middle" class="badge">1</text><path d="M2552.500 1540h1.500v60h-1.500z" fill="#888"/></svg>
</div>
</body>
</html>
```
FILE: styles.css
```css
* { box-sizing: border-box; }
html, body { margin: 0; height: 1600px; overflow: hidden; }
body { width: 2560px; display: flex; flex-direction: column; background: #333; color: #dedede; font: 17px/22px "Open Sans", "Noto Sans", "Noto Sans CJK SC", sans-serif; }
svg { flex: none; display: block; }
.defs { position: absolute; }
text { font-family: "Open Sans", "Noto Sans", sans-serif; }
button { font: inherit; color: inherit; padding: 0; margin: 0; }
b, strong { font-weight: 700; }

.title { height: 34px; flex: none; display: flex; align-items: center; background: #4d4d4d; border-bottom: 1px solid #2e2e2e; }
.quick { display: flex; align-items: center; gap: 5px; padding-left: 7px; width: 967px; }
.quick svg:nth-child(1) { margin-right: 4px; }
.save { color: #7478b8; }
.slot { fill: var(--slot, #f0f0f8); }
.grey { color: #666; --slot: #939393; }
.arrows { margin-top: -6px; }
.caption { width: 1115px; font-size: 18.900px; color: #e2e2e2; }
.top-search { width: 300px; height: 27px; margin-top: -3px; border-radius: 4px; background: #2c2c2c; border: 1px solid #222; display: flex; align-items: center; gap: 14px; padding-left: 14px; font-size: 15.500px; }
.winbtns { margin-left: 36px; overflow: visible; width: 126px; }

.menu { height: 42px; flex: none; background: #414141; display: flex; align-items: center; padding-left: 9px; font-size: 17.500px; }
.menu span { width: 80.500px; white-space: nowrap; }
.menu span:nth-child(10) { width: 123px; }
.menu u { text-underline-offset: 2px; text-decoration-thickness: 1px; }
.menu-icons { margin-left: auto; margin-right: 4px; }

.work { height: 1428px; flex: none; display: flex; padding: 6px; }
.panel { background: #404040; display: flex; flex-direction: column; height: 1416px; }
.panel-head { height: 35px; flex: none; background: #4e4e4e; display: flex; align-items: center; gap: 12px; padding: 0 9px 0 7px; }
.panel-head b { margin-right: auto; font-size: 16.700px; color: #e8e8e8; }
.panel-head .tri { margin-right: -2px; }

.projects { width: 424px; }
.tools { height: 64px; flex: none; display: flex; align-items: flex-start; padding: 23px 0 0 23px; gap: 22px; }
.tools svg:nth-child(2) { margin-top: -2px; margin-right: -4px; }
.tools svg:nth-child(3), .tools svg:nth-child(4) { margin-top: -3px; margin-right: -4px; }
.tools svg:nth-child(3) { margin-left: 1px; }
.tools .vsep { width: 1px; height: 32px; background: #222; margin: -3px -8px 0 -8px; }
.tree-box { margin: 0 13px 0 13px; height: 1304px; border: 1px solid #262626; background: #3c3c3c; padding: 6px 9px; }
.find { height: 32px; border-radius: 5px; background: #2d2d2d; border: 1px solid #212121; display: flex; align-items: center; gap: 13px; padding-left: 16px; }
.tree { list-style: none; margin: 8px 0 0 -2px; padding: 17px 0 0; border-top: 1px solid #262626; width: 381px; }
.tree li { height: 32px; display: flex; align-items: center; }
.tree li > svg { margin-right: 1px; margin-top: -1px; }
.tree b, .tree span { flex: 1; height: 32px; line-height: 24px; padding-left: 2px; border-bottom: 1px solid #343434; white-space: nowrap; font-size: 16.100px; }
.tree b { color: #ececec; font-size: 16.300px; }
.tree .l1 { padding-left: 3px; }
.tree .l2 { padding-left: 21px; }
.tree .l3 { padding-left: 54px; }
.tree i { width: 16px; height: 14px; flex: none; margin-top: 2px; }
.tree i::before { content: ""; display: block; margin-left: 2px; border-left: 8px solid #fff; border-top: 7px solid transparent; border-bottom: 7px solid transparent; }
.tree .open i::before { width: 10px; height: 10px; margin: 2px 0 0; border: 0; background: linear-gradient(135deg, transparent 50%, #fff 50%); }
.tree .active b { background: #505050; color: #fff; }
.tree .l1 b { padding-left: 1px; }
.tree .picked span { background: #6484a4; border: 1px solid #7095bb; outline: 1px solid #324a63; outline-offset: -3px; padding-left: 1px; line-height: 23px; color: #fff; }

.editor { width: 1689px; margin-left: 4px; display: flex; flex-direction: column; }
.tabs { height: 37px; display: flex; padding-left: 1px; }
.doc-tab { width: 190px; border: 1px solid #272727; border-bottom: 0; border-radius: 5px 5px 0 0; background: #535353; display: flex; align-items: center; gap: 7px; padding: 0 0 2px 7px; font-size: 16.200px; box-shadow: inset 0 1px #6a6a6a; }
.view { height: 1346px; position: relative; background: linear-gradient(#fff, #dedede); }
.hud { position: absolute; left: 0; top: 0; width: 302px; height: 98px; background: linear-gradient(#414141, #507f9c); border: 2px solid #474b50; border-top: 0; padding: 6px 0 0 4px; font: bold 20px/22px "Liberation Sans", Arial, sans-serif; color: #dcd9a8; }
.xy { display: grid; grid-template-columns: 29px 101px 41px 1fr; white-space: nowrap; font-size: 19.700px; }
.lay { color: #ff0; font-size: 23.700px; line-height: 27px; margin-top: 1px; }
.snap { font-size: 16px; line-height: 15px; }
.bar { position: absolute; left: 487px; top: 3px; width: 714px; height: 50px; border-radius: 5px; background: #404040; display: flex; padding-left: 4px; }
.bar svg { width: 50.300px; height: 50px; }
.bar .more { background: linear-gradient(135deg, transparent 50%, #d0d0d0 50%) no-repeat right 2px bottom 3px / 8px 8px; }
.bigA { font: 38px "Liberation Serif", serif; fill: #868686; }

.shade { fill: #1c5427; opacity: .7; }
.smd { fill: #3c6c2b; stroke: #4b7c50; opacity: .75; }
.pins { fill: none; stroke: #3f6f38; opacity: .85; }
.dim { fill: none; stroke: #3f6a26; stroke-width: 11; }
.dimthin { fill: none; stroke: #3f6a26; stroke-width: 2.300; }
.track { fill: none; stroke: #618f34; stroke-width: 2.400; }
.stem { fill: none; stroke: #282828; stroke-width: 41; stroke-linecap: round; }
.tip { fill: #3c3c3c; stroke: #333; }
.chiptext text { font: 7px "Liberation Serif", serif; fill: #ccc; }
.sot { font: 8.500px "Liberation Sans", sans-serif; fill: #ccc; }
.axis text { font: 19px "Liberation Sans", sans-serif; text-anchor: middle; }

.layers { height: 33px; display: flex; padding-left: 5px; }
.ls { display: flex; width: 69px; height: 21px; margin: 6px 5px 0 0; font-size: 14.500px; }
.ls i { width: 37px; background: #f00; border: 1px solid #222; }
.ls span { width: 32px; border: 1px solid #222; border-radius: 0 5px 5px 0; background: #505050; text-align: center; line-height: 19px; }
.ly { height: 32px; border: 1px solid #242424; border-top: 0; border-radius: 0 0 6px 6px; background: #3f3f3f; display: flex; align-items: center; padding: 2px 0 0 10px; gap: 13px; font-size: 15.900px; white-space: nowrap; }
.ly i { width: 15px; height: 15px; border: 1px solid #999; margin-top: -2px; }
.ly.on { background: #505050; color: #fff; font-weight: 700; font-size: 15.600px; padding-left: 8px; gap: 14px; }
.w1 { width: 150px; } .w2 { width: 174px; } .w3 { width: 138px; } .w4 { width: 166px; } .w5 { width: 129px; } .w6 { width: 156px; }
.c-red { background: #f00; } .c-blue { background: #00f; } .c-yel { background: #ff0; } .c-olive { background: #808000; } .c-pur { background: #800080; } .c-mag { background: #f0f; }

.props { width: 426px; margin-left: 5px; overflow: hidden; }
.scope { display: flex; align-items: center; padding: 12px 12px 0 13px; height: 54px; flex: none; font-size: 16.200px; }
.cnt { margin-left: auto; margin-right: 8px; }
.scope > span { margin-top: -3px; }
.fbtn { display: flex; border: 1px solid #242424; border-radius: 5px; background: #525252; overflow: hidden; height: 42px; }
.fbtn svg:first-child { background: #6484a4; height: 40px; border-right: 1px solid #2a2a2a; }
.psearch { margin: 14px 12px 0; height: 35px; flex: none; border-radius: 5px; background: #2d2d2d; border: 1px solid #242424; display: flex; align-items: center; gap: 9px; padding: 0 0 2px 11px; font-size: 16px; }
.scroller { display: flex; height: 1258px; margin-top: 8px; flex: none; }
.content { width: 402px; height: 1250px; overflow: hidden; padding-left: 12px; }
.content h3 { margin: 0; height: 53px; padding: 23px 0 0 14px; font-size: 16px; line-height: 22px; color: #fff; background: linear-gradient(135deg, transparent 50%, #fff 50%) no-repeat 0 30px / 8px 8px; }
.content .h3rd { height: 46px; padding-top: 16px; background-position-y: 23px; }
.group { width: 390px; background: #474747; border-radius: 4px; }
.sel { height: 237px; padding: 10px 9px; }
.btn { display: block; border: 1px solid #252525; border-radius: 5px; background: #525252; box-shadow: inset 0 1px #636363; text-align: center; color: #e6e6e6; font-size: 16px; line-height: 20px; }
.all { width: 135px; height: 39px; padding-bottom: 3px; }
.chips { display: flex; gap: 8px; margin: 7px 0 8px 1px; }
.chips + .chips { margin-top: 8px; }
.chips b, .chip { height: 36px; border-radius: 4px; background: #6484a4; border: 1px solid #3d5a78; font-weight: 400; font-size: 16px; text-align: center; line-height: 32px; color: #f2f2f2; }
.n1 { width: 123px; } .n2 { width: 101px; } .n3 { width: 96px; } .n4 { width: 71px; } .n5 { width: 57px; } .n6 { width: 60px; } .n7 { width: 56px; } .n8 { width: 85px; } .n9 { width: 93px; } .n10 { width: 52px; } .n11 { width: 62px; } .n12 { width: 77px; } .n13 { width: 69px; }
.snapg { height: 629px; padding: 9px 9px 0; }
.modes { display: flex; gap: 6px; padding-left: 1px; }
.chip { width: 65px; height: 38px; line-height: 34px; }
.g2 { width: 79px; height: 38px; padding-bottom: 2px; }
.g3 { width: 62px; height: 38px; padding-bottom: 2px; }
.lab { display: flex; justify-content: space-between; height: 38px; padding-top: 9px; font-size: 16px; color: #a0a0a0; }
.lab strong { color: #fff; font-size: 15.500px; }
.lab.l2b { height: 37px; padding-top: 7px; }
.seg { display: flex; height: 38px; border: 1px solid #262626; border-radius: 5px; background: #525252; overflow: hidden; box-shadow: inset 0 1px #636363; }
.seg span { width: 123px; text-align: center; line-height: 34px; font-size: 15.800px; border-right: 1px solid #262626; }
.seg span:first-child { width: 126px; }
.seg span:last-child { border: 0; }
.seg .on { background: #6484a4; }
.table { height: 377px; border: 1px solid #262626; border-radius: 3px; overflow: hidden; background: #3b3b3b; }
.th { height: 30px; background: #474747; border-bottom: 1px solid #262626; display: flex; font-size: 15.800px; line-height: 30px; padding-right: 22px; }
.th span:first-child { width: 75px; padding-left: 12px; }
.th span:last-child { flex: 1; padding-left: 10px; margin: 5px 0 6px; line-height: 19px; border-right: 1px solid #262626; border-left: 1px solid #262626; }
.tb { display: flex; height: 346px; }
.rows { flex: 1; }
.r { height: 31.500px; display: flex; align-items: center; border-bottom: 1px solid #343434; }
.r i { width: 24px; height: 24px; margin: 0 29px 0 22px; border-radius: 5px; border: 1px solid #262626; background: #525252; box-shadow: inset 0 1px #606060; }
.r i svg { width: 22px; height: 22px; }
.r span { flex: 1; height: 31px; padding-left: 15px; line-height: 32px; border-left: 1px solid #333; font-size: 15.700px; }
.r.cur { background: #6484a4; color: #fff; }
.tb .sb { background: #424242; }
.field { display: flex; justify-content: flex-end; gap: 18px; margin-top: 6px; }
.f1 { margin-top: 10px; }
.field label { font-size: 16.300px; padding-top: 3px; }
.inp { width: 147px; height: 35px; border: 1px solid #242424; border-radius: 5px; background: #2d2d2d; padding: 0 8px; line-height: 35px; display: flex; justify-content: space-between; align-items: center; color: #f0f0f0; font-size: 16px; }
.info { height: 290px; padding: 12px 9px; font-size: 16px; }
.info strong { display: block; height: 28px; font-size: 15.800px; color: #fff; line-height: 22px; }
.kv { display: grid; grid-template-columns: 207px 1fr; gap: 18px; height: 29px; line-height: 29px; font-size: 15.800px; }
.kv span:first-child { text-align: right; }
.lnk { color: #a9c3e0; text-decoration: underline dashed 1px; text-underline-offset: 5px; }
.info hr { border: 0; height: 2px; background: #2c2c2c; margin: 6px 0 11px; }
.nothing { margin: -5px 0 0 11px; height: 22px; flex: none; font-size: 15.800px; line-height: 22px; }

.status { height: 36px; flex: none; background: #404040; display: flex; align-items: center; padding: 0 5px 0 8px; font-size: 15.900px; }
.s1 { width: 170px; white-space: nowrap; } .s2 { width: 108px; }
.s3 { width: 363px; } .s4 { width: 648px; height: 30px; border: solid #333; border-width: 0 1px; }
.pn { width: 88px; height: 27px; margin: -2px 0 0 auto; }

.taskbar { height: 60px; flex: none; display: flex; background: linear-gradient(90deg, #262427 0, #262427 500px, #38292b 600px, #312627 800px, #262325 1000px, #332a2c 1200px, #413635 1400px, #3b2c2e 1950px, #2a2427 2130px, #252225 2560px); }
.start { width: 72px; display: flex; align-items: center; justify-content: center; padding-left: 2px; }
.wsearch { width: 516px; height: 60px; border: 2px solid #595656; background: #333; display: flex; align-items: center; gap: 16px; padding-left: 16px; font-size: 22px; color: #dadada; white-space: nowrap; }
.apps { display: flex; }
.app { width: 75.300px; display: flex; align-items: center; justify-content: center; }
.app.sys { width: 72px; }
.app.run { background: linear-gradient(#aaa5a0, #aaa5a0) no-repeat 50% 100% / 61px 3px; }
.app.multi { background: linear-gradient(90deg, #aaa5a0 48px, #6f6b69 48px) no-repeat 50% 100% / 61px 3px; }
.app.cur { background-color: #625e5f; background-size: 100% 3px; width: 73px; margin-left: 1px; }
.app.run:nth-child(3) { margin-left: 3px; }
.tray { margin-left: auto; }
.clock { width: 150px; display: flex; flex-direction: column; font-size: 18.500px; line-height: 28px; text-align: center; padding-top: 1px; color: #fff; }
.pp { font: bold 17px "Open Sans", sans-serif; fill: #fff; }
.ps { font: bold 17px "Open Sans", sans-serif; fill: #e6f8ff; }
.badge { font: bold 17px "Open Sans", sans-serif; fill: #fff; }
```
